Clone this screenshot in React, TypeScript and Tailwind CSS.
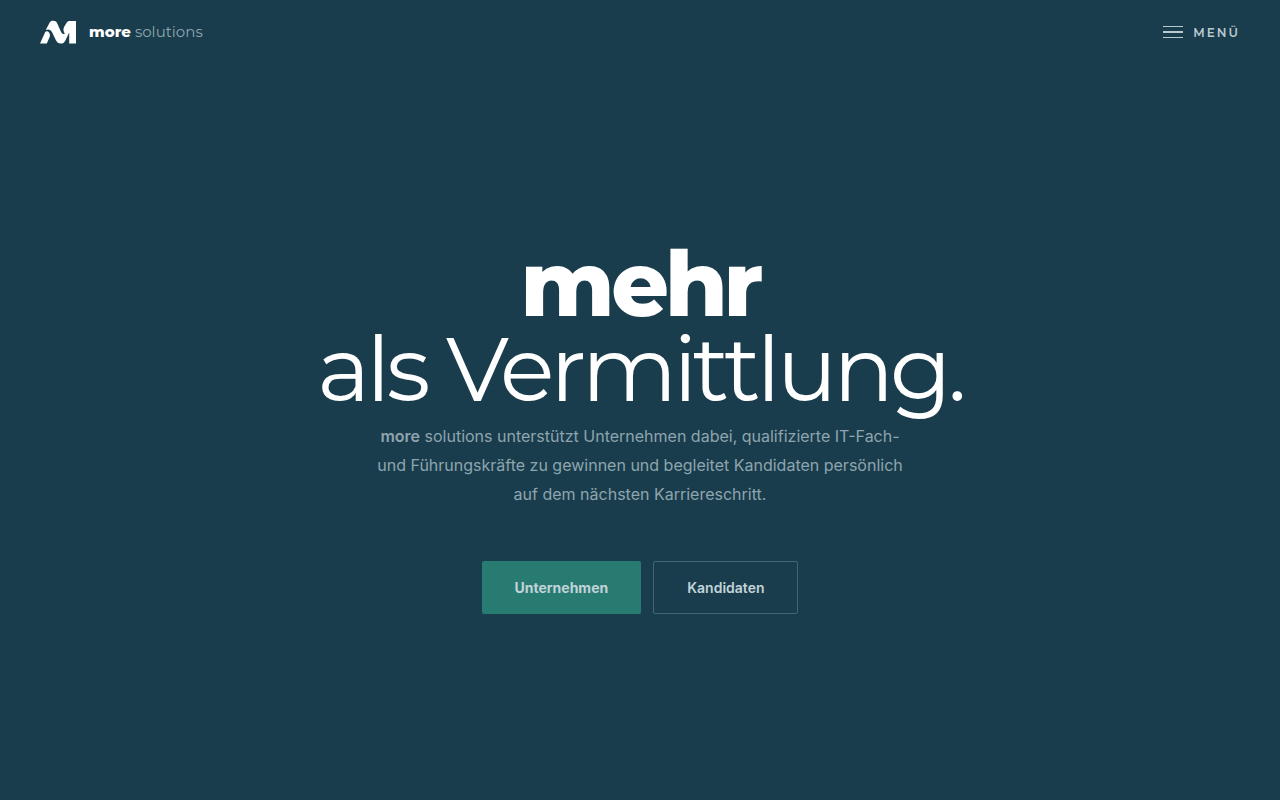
import React from 'react';

const LogoMark = () => (
  <svg viewBox="0 0 36 24" className="h-6 w-9" fill="currentColor" aria-hidden="true">
    <path d="M0 23.5 L5 12.6 C6 10.6 7.8 10.8 9 12.4 C10.4 14.3 10.2 16 9.2 18 L6.8 23.5 Z" />
    <path d="M5.8 10 L9.4 3 C10.2 1.4 11.4 .8 13 .8 C15 .8 16.4 1.6 17.2 3.2 L20.4 10.4 C21.4 13 22.8 14.4 24.8 14 C23.2 11 23 9 24.2 6.8 L26.6 2.8 C27.3 1.5 28.4 1 29.6 1 H36 V23.5 H29.2 V12.6 L25.2 20.8 C24.2 22.8 22.8 23.6 20.8 23.6 C18.4 23.6 17 22.4 15.8 20 L12.2 12.6 C10.8 9.8 8.6 8.6 5.8 10 Z" />
  </svg>
);

const Header = () => (
  <header className="flex h-16 items-center justify-between px-10">
    <a href="#" className="flex items-center gap-[13px] text-white">
      <LogoMark />
      <span className="text-[15px] leading-6 text-[#8ea5af]">
        <strong className="font-extrabold text-white">more</strong> solutions
      </span>
    </a>
    <button type="button" className="flex items-center gap-2.5 text-[#b9cad1]">
      <span className="flex w-5 flex-col gap-1" aria-hidden="true">
        <span className="h-px bg-current" />
        <span className="h-0.5 bg-current" />
        <span className="h-px bg-current" />
      </span>
      <span className="pt-px text-xs font-semibold tracking-[2px]">MENÜ</span>
    </button>
  </header>
);

const Hero = () => (
  <main className="flex flex-1 flex-col items-center justify-center px-6 pb-2 text-center">
    <h1 className="text-[90px] leading-[85px] tracking-[-4px] text-white">
      <strong className="block font-extrabold">mehr</strong>
      als Vermittlung.
    </h1>
    <p className="mt-2.5 max-w-[540px] font-['Inter',sans-serif] text-base leading-[29px] text-[#8ea5af]">
      <strong className="font-semibold">more</strong> solutions unterstützt Unternehmen dabei,
      qualifizierte <span className="whitespace-nowrap">IT-Fach-</span> und Führungskräfte zu
      gewinnen und begleitet Kandidaten persönlich auf dem nächsten Karriereschritt.
    </p>
    <div className="mt-13 flex gap-3 font-['Inter',sans-serif] text-sm font-semibold text-[#c1d3d9]">
      <a href="#unternehmen" className="rounded-xs bg-[#287b70] px-[33px] py-4 leading-[21px] font-bold">
        Unternehmen
      </a>
      <a href="#kandidaten" className="rounded-xs border border-[#456571] px-[33px] py-4 leading-[19px]">
        Kandidaten
      </a>
    </div>
  </main>
);

const App = () => (
  <div className="flex min-h-screen flex-col bg-[#193d4c] font-['Montserrat',sans-serif]">
    <Header />
    <Hero />
  </div>
);

export default App;
